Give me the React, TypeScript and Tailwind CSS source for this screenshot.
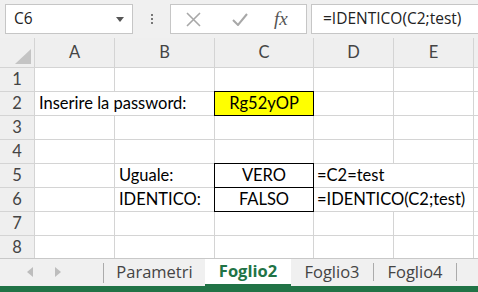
import { ReactNode } from 'react'

const cellFont = { fontFamily: 'Lato, "Noto Sans", sans-serif' }
const uiFont = { fontFamily: '"Open Sans", "Noto Sans", sans-serif' }

const columns = ['A', 'B', 'C', 'D', 'E', '']

function Cell({
  children,
  className = '',
  fill = 'bg-white',
}: {
  children?: ReactNode
  className?: string
  fill?: string
}) {
  return (
    <div
      className={`flex items-center overflow-visible whitespace-nowrap text-[16.5px] text-black ${fill} ${className}`}
      style={cellFont}
    >
      {children}
    </div>
  )
}

function Toolbar() {
  return (
    <div className="flex h-[38px] shrink-0 items-start pt-[4px]" style={uiFont}>
      <div className="ml-[5px] flex h-[30px] w-[128px] items-center justify-between border border-[#c6c6c6] bg-white pl-[8px] pr-[8px]">
        <span className="text-[15.5px] text-[#222]">C6</span>
        <svg width="8" height="5" viewBox="0 0 8 5">
          <path d="M0 0h8L4 5z" fill="#555" />
        </svg>
      </div>
      <div className="flex h-[30px] w-[37px] flex-col items-center justify-center gap-[2px]">
        <span className="h-[2px] w-[2px] bg-[#777]" />
        <span className="h-[2px] w-[2px] bg-[#777]" />
        <span className="h-[2px] w-[2px] bg-[#777]" />
      </div>
      <div className="flex h-[30px] w-[137px] items-center border border-[#c6c6c6] bg-white">
        <svg className="ml-[15px]" width="15" height="15" viewBox="0 0 15 15">
          <path d="M1 1l13 13M14 1L1 14" stroke="#a8a8a8" strokeWidth="1.6" />
        </svg>
        <svg className="ml-[31px]" width="16" height="13" viewBox="0 0 16 13">
          <path d="M1 7l5 5L15 1" stroke="#a8a8a8" strokeWidth="2" fill="none" />
        </svg>
        <span
          className="ml-[26px] text-[19px] italic text-[#555]"
          style={{ fontFamily: '"Liberation Serif", serif' }}
        >
          fx
        </span>
      </div>
      <div className="ml-[4px] flex h-[30px] flex-1 items-center border border-r-0 border-[#c6c6c6] bg-white pl-[11px]">
        <span className="text-[15.5px] text-[#222]">=IDENTICO(C2;test)</span>
      </div>
    </div>
  )
}

function Sheet() {
  const rowHeader = (n: number) => (
    <div
      key={`r${n}`}
      className="flex items-center justify-center bg-[#efefef] text-[16.5px] text-[#444]"
      style={cellFont}
    >
      {n}
    </div>
  )
  const empty = (k: string) => <Cell key={k} />

  return (
    <div className="grid shrink-0 grid-cols-[34px_79px_99px_98px_79px_79px_1fr] grid-rows-[29px_repeat(7,23px)_22px] gap-px border-b border-[#c8c8c8] bg-[#d4d4d4]">
      <div className="relative bg-[#efefef]">
        <svg className="absolute bottom-[3px] right-[3px]" width="16" height="15" viewBox="0 0 16 15">
          <path d="M16 0v15H0z" fill="#c4c4c4" />
        </svg>
      </div>
      {columns.map((c) => (
        <div
          key={c || 'F'}
          className="flex items-center justify-center bg-[#efefef] text-[16.5px] text-[#444]"
          style={cellFont}
        >
          {c}
        </div>
      ))}

      {rowHeader(1)}
      {['a', 'b', 'c', 'd', 'e', 'f'].map((k) => empty(`1${k}`))}

      {rowHeader(2)}
      <Cell className="col-span-2 pl-[4px]">Inserire la password:</Cell>
      <Cell fill="bg-[#ffff00]" className="justify-center outline outline-1 outline-black">
        Rg52yOP
      </Cell>
      {['d', 'e', 'f'].map((k) => empty(`2${k}`))}

      {rowHeader(3)}
      {['a', 'b', 'c', 'd', 'e', 'f'].map((k) => empty(`3${k}`))}

      {rowHeader(4)}
      {['a', 'b', 'c', 'd', 'e', 'f'].map((k) => empty(`4${k}`))}

      {rowHeader(5)}
      {empty('5a')}
      <Cell className="pl-[4px]">Uguale:</Cell>
      <Cell className="justify-center outline outline-1 outline-black">VERO</Cell>
      <Cell className="col-span-2 pl-[3px]">=C2=test</Cell>
      {empty('5f')}

      {rowHeader(6)}
      {empty('6a')}
      <Cell className="pl-[4px]">IDENTICO:</Cell>
      <Cell className="justify-center outline outline-1 outline-black">FALSO</Cell>
      <Cell className="col-span-2 pl-[3px]">=IDENTICO(C2;test)</Cell>
      {empty('6f')}

      {rowHeader(7)}
      {['a', 'b', 'c', 'd', 'e', 'f'].map((k) => empty(`7${k}`))}

      {rowHeader(8)}
      {['a', 'b', 'c', 'd', 'e', 'f'].map((k) => empty(`8${k}`))}
    </div>
  )
}

function Tab({ name, active }: { name: string; active?: boolean }) {
  if (active)
    return (
      <div className="flex h-[27px] w-[86px] items-center justify-center border-b-2 border-[#217346] bg-white pb-[1px] text-[16.5px] font-bold text-[#217346]">
        {name}
      </div>
    )
  return (
    <div className="flex h-[26px] items-center">
      <div className="flex w-[82px] justify-center text-[16.5px] text-[#444]">{name}</div>
      <span className="h-[18px] w-px bg-[#ababab]" />
    </div>
  )
}

function TabBar() {
  return (
    <div className="flex h-[27px] shrink-0 items-start bg-[#f0f0f0]" style={uiFont}>
      <div className="flex h-[26px] w-[103px] items-center">
        <svg className="ml-[27px]" width="6" height="10" viewBox="0 0 6 10">
          <path d="M6 0v10L0 5z" fill="#bdbdbd" />
        </svg>
        <svg className="ml-[22px]" width="6" height="10" viewBox="0 0 6 10">
          <path d="M0 0v10l6-5z" fill="#bdbdbd" />
        </svg>
      </div>
      <span className="mt-[4px] h-[20px] w-px bg-[#ababab]" />
      <div className="flex h-[26px] w-[101px] items-center justify-center text-[16.5px] text-[#444]">
        Parametri
      </div>
      <Tab name="Foglio2" active />
      <Tab name="Foglio3" />
      <Tab name="Foglio4" />
    </div>
  )
}

export default function App() {
  return (
    <div className="flex h-[292px] w-[478px] flex-col overflow-hidden bg-[#f0f0f0]">
      <Toolbar />
      <Sheet />
      <TabBar />
      <div className="flex-1 bg-[#217346]" />
    </div>
  )
}
